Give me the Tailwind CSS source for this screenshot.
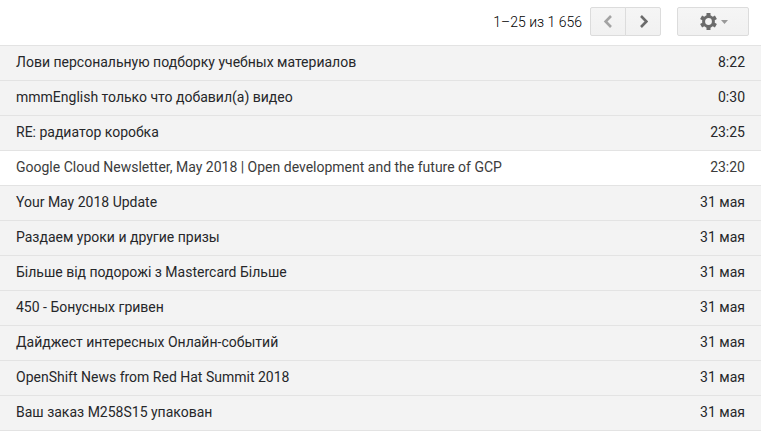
<!DOCTYPE html>
<html lang="ru">
<head>
    <meta charset="UTF-8">
    <meta name="viewport" content="width=device-width, initial-scale=1.0">
    <title>Почта</title>
    <script src="https://cdn.jsdelivr.net/npm/@tailwindcss/browser@4"></script>
</head>
<body class="bg-white font-['Roboto',sans-serif] text-sm text-[#26272a]">
    <header class="flex items-center justify-end pt-[7px] pb-[9px] pr-3">
        <span class="mr-2 font-light text-black">1–25 из 1 656</span>
        <div class="flex mr-4">
            <button type="button" aria-label="Назад" disabled class="flex items-center justify-center w-9 h-[29px] rounded-l-xs border border-[#dcdcdc] bg-linear-to-b from-[#f5f5f5] to-[#f1f1f1]">
                <svg class="w-[10px] h-[14px]" viewBox="0 0 10 14" fill="none" stroke="#a3a3a3" stroke-width="2.6"><path d="M8 1 2.600 6.500 8 12"/></svg>
            </button>
            <button type="button" aria-label="Вперёд" class="flex items-center justify-center w-9 h-[29px] -ml-px rounded-r-xs border border-[#dcdcdc] bg-linear-to-b from-[#f5f5f5] to-[#f1f1f1]">
                <svg class="w-[10px] h-[14px]" viewBox="0 0 10 14" fill="none" stroke="#6b6b6b" stroke-width="2.6"><path d="M3 1 8.400 6.500 3 12"/></svg>
            </button>
        </div>
        <button type="button" aria-label="Настройки" class="flex items-center justify-center gap-1 w-[72px] h-[29px] rounded-xs border border-[#dcdcdc] bg-linear-to-b from-[#f5f5f5] to-[#f1f1f1]">
            <svg class="w-[18px] h-[18px]" viewBox="0 0 18 18" fill="none" stroke="#6b6b6b">
                <circle cx="9.500" cy="8.500" r="4.900" stroke-width="3"/>
                <path d="M9.500 0v3.500M9.500 13.500V17M2.100 4.300l3 1.700M13.900 11l3 1.700M2.100 12.700l3-1.700M13.900 6l3-1.700" stroke-width="4"/>
            </svg>
            <svg class="w-[7px] h-1" viewBox="0 0 7 4" fill="#999"><path d="M0 0h7L3.500 4z"/></svg>
        </button>
    </header>

    <table class="w-full border-collapse">
        <tbody>
            <tr class="h-[35px] border-y border-[#e3e3e3] bg-[#f3f3f3]">
                <td class="pl-4 pb-0.5">Лови персональную подборку учебных материалов</td>
                <td class="pr-4 pb-0.5 text-right">8:22</td>
            </tr>
            <tr class="h-[35px] border-y border-[#e3e3e3] bg-[#f3f3f3]">
                <td class="pl-4 pb-0.5">mmmEnglish только что добавил(а) видео</td>
                <td class="pr-4 pb-0.5 text-right">0:30</td>
            </tr>
            <tr class="h-[35px] border-y border-[#e3e3e3] bg-[#f3f3f3]">
                <td class="pl-4 pb-0.5">RE: радиатор коробка</td>
                <td class="pr-4 pb-0.5 text-right">23:25</td>
            </tr>
            <tr class="h-[35px] border-y border-[#e3e3e3] bg-white text-[#3c3c3c]">
                <td class="pl-4 pb-0.5">Google Cloud Newsletter, May 2018 | Open development and the future of GCP</td>
                <td class="pr-4 pb-0.5 text-right">23:20</td>
            </tr>
            <tr class="h-[35px] border-y border-[#e3e3e3] bg-[#f3f3f3]">
                <td class="pl-4 pb-0.5">Your May 2018 Update</td>
                <td class="pr-4 pb-0.5 text-right">31 мая</td>
            </tr>
            <tr class="h-[35px] border-y border-[#e3e3e3] bg-[#f3f3f3]">
                <td class="pl-4 pb-0.5">Раздаем уроки и другие призы</td>
                <td class="pr-4 pb-0.5 text-right">31 мая</td>
            </tr>
            <tr class="h-[35px] border-y border-[#e3e3e3] bg-[#f3f3f3]">
                <td class="pl-4 pb-0.5">Більше від подорожі з Mastercard Більше</td>
                <td class="pr-4 pb-0.5 text-right">31 мая</td>
            </tr>
            <tr class="h-[35px] border-y border-[#e3e3e3] bg-[#f3f3f3]">
                <td class="pl-4 pb-0.5">450 - Бонусных гривен</td>
                <td class="pr-4 pb-0.5 text-right">31 мая</td>
            </tr>
            <tr class="h-[35px] border-y border-[#e3e3e3] bg-[#f3f3f3]">
                <td class="pl-4 pb-0.5">Дайджест интересных Онлайн-событий</td>
                <td class="pr-4 pb-0.5 text-right">31 мая</td>
            </tr>
            <tr class="h-[35px] border-y border-[#e3e3e3] bg-[#f3f3f3]">
                <td class="pl-4 pb-0.5">OpenShift News from Red Hat Summit 2018</td>
                <td class="pr-4 pb-0.5 text-right">31 мая</td>
            </tr>
            <tr class="h-[35px] border-y border-[#e3e3e3] bg-[#f3f3f3]">
                <td class="pl-4 pb-0.5">Ваш заказ M258S15 упакован</td>
                <td class="pr-4 pb-0.5 text-right">31 мая</td>
            </tr>
        </tbody>
    </table>
</body>
</html>
